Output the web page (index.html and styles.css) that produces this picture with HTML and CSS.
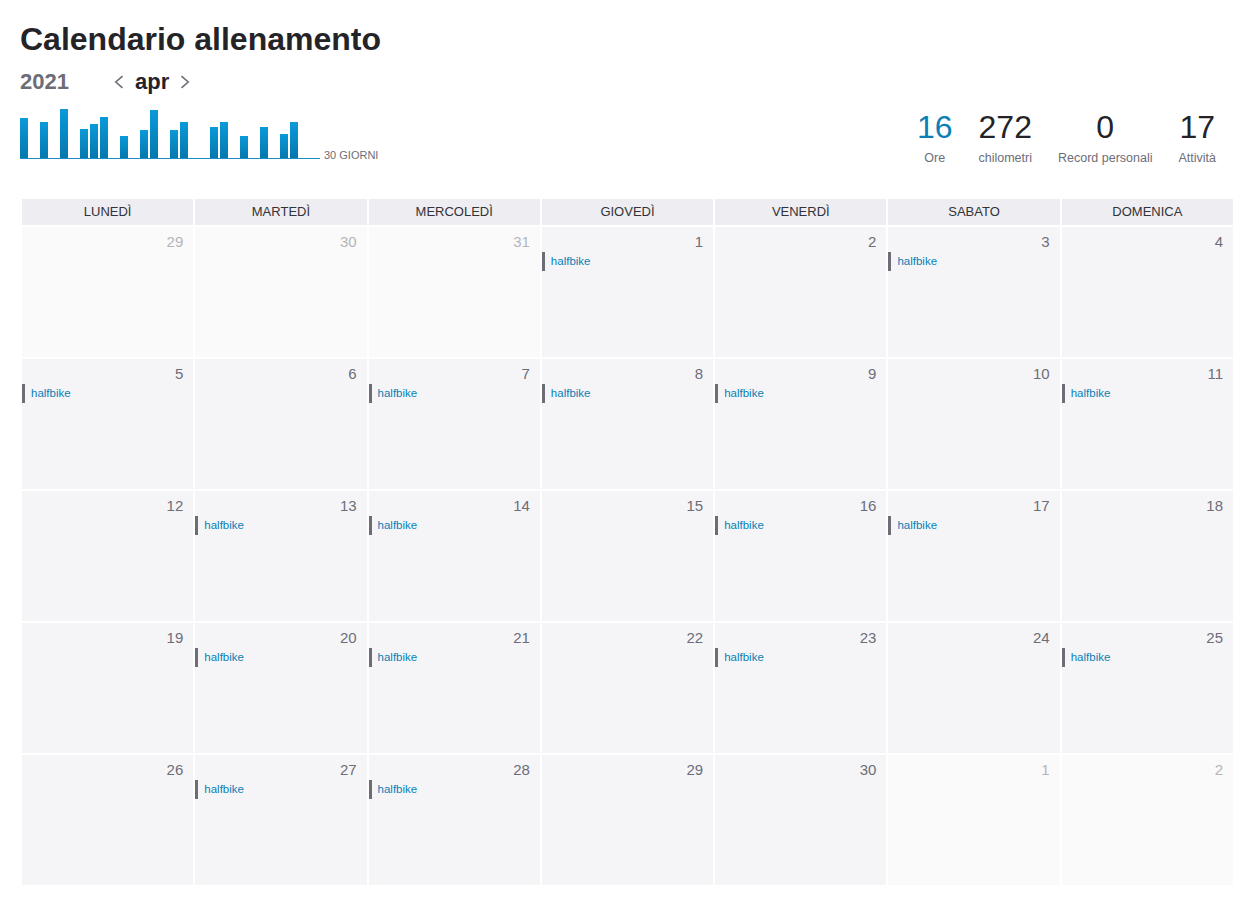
FILE: index.html
```html
<!DOCTYPE html>
<html lang="it">
<head>
<meta charset="utf-8">
<title>Calendario allenamento</title>
<link rel="stylesheet" href="styles.css">
</head>
<body>
<div class="page">
  <h1 class="title">Calendario allenamento</h1>
  <div class="subrow">
    <span class="year">2021</span>
    <div class="month-nav">
      <svg class="chev" width="10" height="14" viewBox="0 0 10 14"><polyline points="8.5,1.2 1.8,7 8.5,12.8" fill="none" stroke="#6d6d78" stroke-width="1.6"/></svg>
      <span class="month">apr</span>
      <svg class="chev" width="10" height="14" viewBox="0 0 10 14"><polyline points="1.5,1.2 8.2,7 1.5,12.8" fill="none" stroke="#6d6d78" stroke-width="1.6"/></svg>
    </div>
  </div>
  <div class="summary">
    <div class="chart-wrap">
      <div class="chart">
        <div class="slot"><div class="bar" style="height:40px"></div></div>
        <div class="slot"></div>
        <div class="slot"><div class="bar" style="height:36px"></div></div>
        <div class="slot"></div>
        <div class="slot"><div class="bar" style="height:49px"></div></div>
        <div class="slot"></div>
        <div class="slot"><div class="bar" style="height:29px"></div></div>
        <div class="slot"><div class="bar" style="height:34px"></div></div>
        <div class="slot"><div class="bar" style="height:41px"></div></div>
        <div class="slot"></div>
        <div class="slot"><div class="bar" style="height:22px"></div></div>
        <div class="slot"></div>
        <div class="slot"><div class="bar" style="height:28px"></div></div>
        <div class="slot"><div class="bar" style="height:48px"></div></div>
        <div class="slot"></div>
        <div class="slot"><div class="bar" style="height:28px"></div></div>
        <div class="slot"><div class="bar" style="height:36px"></div></div>
        <div class="slot"></div>
        <div class="slot"></div>
        <div class="slot"><div class="bar" style="height:31px"></div></div>
        <div class="slot"><div class="bar" style="height:36px"></div></div>
        <div class="slot"></div>
        <div class="slot"><div class="bar" style="height:22px"></div></div>
        <div class="slot"></div>
        <div class="slot"><div class="bar" style="height:31px"></div></div>
        <div class="slot"></div>
        <div class="slot"><div class="bar" style="height:24px"></div></div>
        <div class="slot"><div class="bar" style="height:36px"></div></div>
        <div class="slot"></div>
        <div class="slot"></div>
      </div>
      <span class="chart-label">30 GIORNI</span>
    </div>
    <div class="stats">
      <div class="stat"><div class="stat-num accent">16</div><div class="stat-label">Ore</div></div>
      <div class="stat"><div class="stat-num">272</div><div class="stat-label">chilometri</div></div>
      <div class="stat"><div class="stat-num">0</div><div class="stat-label">Record personali</div></div>
      <div class="stat"><div class="stat-num">17</div><div class="stat-label">Attività</div></div>
    </div>
  </div>

  <div class="calendar">
    <div class="cal-head">
      <div class="dow">LUNEDÌ</div>
      <div class="dow">MARTEDÌ</div>
      <div class="dow">MERCOLEDÌ</div>
      <div class="dow">GIOVEDÌ</div>
      <div class="dow">VENERDÌ</div>
      <div class="dow">SABATO</div>
      <div class="dow">DOMENICA</div>
    </div>
    <div class="cal-body">
      <div class="day other"><div class="num">29</div></div>
      <div class="day other"><div class="num">30</div></div>
      <div class="day other"><div class="num">31</div></div>
      <div class="day"><div class="num">1</div><div class="event">halfbike</div></div>
      <div class="day"><div class="num">2</div></div>
      <div class="day"><div class="num">3</div><div class="event">halfbike</div></div>
      <div class="day"><div class="num">4</div></div>

      <div class="day"><div class="num">5</div><div class="event">halfbike</div></div>
      <div class="day"><div class="num">6</div></div>
      <div class="day"><div class="num">7</div><div class="event">halfbike</div></div>
      <div class="day"><div class="num">8</div><div class="event">halfbike</div></div>
      <div class="day"><div class="num">9</div><div class="event">halfbike</div></div>
      <div class="day"><div class="num">10</div></div>
      <div class="day"><div class="num">11</div><div class="event">halfbike</div></div>

      <div class="day"><div class="num">12</div></div>
      <div class="day"><div class="num">13</div><div class="event">halfbike</div></div>
      <div class="day"><div class="num">14</div><div class="event">halfbike</div></div>
      <div class="day"><div class="num">15</div></div>
      <div class="day"><div class="num">16</div><div class="event">halfbike</div></div>
      <div class="day"><div class="num">17</div><div class="event">halfbike</div></div>
      <div class="day"><div class="num">18</div></div>

      <div class="day"><div class="num">19</div></div>
      <div class="day"><div class="num">20</div><div class="event">halfbike</div></div>
      <div class="day"><div class="num">21</div><div class="event">halfbike</div></div>
      <div class="day"><div class="num">22</div></div>
      <div class="day"><div class="num">23</div><div class="event">halfbike</div></div>
      <div class="day"><div class="num">24</div></div>
      <div class="day"><div class="num">25</div><div class="event">halfbike</div></div>

      <div class="day"><div class="num">26</div></div>
      <div class="day"><div class="num">27</div><div class="event">halfbike</div></div>
      <div class="day"><div class="num">28</div><div class="event">halfbike</div></div>
      <div class="day"><div class="num">29</div></div>
      <div class="day"><div class="num">30</div></div>
      <div class="day other"><div class="num">1</div></div>
      <div class="day other"><div class="num">2</div></div>
    </div>
  </div>
</div>
</body>
</html>
```

FILE: styles.css
```css
* { box-sizing: border-box; }

html, body {
  margin: 0;
  padding: 0;
  background: #ffffff;
}

body {
  font-family: "Liberation Sans", Arial, sans-serif;
  color: #242428;
}

.page {
  padding: 20px 16px 0 20px;
}

.title {
  margin: 0;
  font-size: 32px;
  line-height: 38px;
  font-weight: 700;
  color: #242428;
}

.subrow {
  display: flex;
  align-items: center;
  margin-top: 11px;
  height: 26px;
}

.year {
  font-size: 22px;
  line-height: 26px;
  font-weight: 700;
  color: #6d6d78;
  width: 94px;
}

.month-nav {
  display: flex;
  align-items: center;
}

.chev {
  display: block;
}

.month {
  font-size: 22px;
  line-height: 26px;
  font-weight: 700;
  color: #242428;
  margin: 0 11px 0 11px;
}

.summary {
  display: flex;
  justify-content: space-between;
  align-items: flex-start;
  margin-top: 13px;
}

.chart-wrap {
  display: flex;
  align-items: flex-end;
}

.chart {
  display: flex;
  align-items: flex-end;
  height: 51px;
  border-bottom: 1px solid #1b8cc2;
}

.slot {
  width: 10px;
  height: 100%;
  display: flex;
  align-items: flex-end;
}

.bar {
  width: 8px;
  background: linear-gradient(to bottom, #0a9ad9, #0578ad);
}

.chart-label {
  font-size: 11px;
  line-height: 11px;
  color: #6d6d78;
  margin-left: 4px;
  margin-bottom: -2px;
}

.stats {
  display: flex;
  gap: 26px;
  margin-top: 1px;
  margin-right: 17px;
}

.stat {
  display: flex;
  flex-direction: column;
  align-items: center;
}

.stat-num {
  font-size: 32px;
  line-height: 36px;
  font-weight: 400;
  color: #242428;
}

.stat-num.accent {
  color: #0a7fb6;
}

.stat-label {
  margin-top: 5px;
  font-size: 12.5px;
  line-height: 16px;
  color: #6d6d78;
}

.calendar {
  margin: 33px 0 0 2px;
}

.cal-head {
  display: grid;
  grid-template-columns: repeat(7, 1fr);
  column-gap: 2px;
  margin-bottom: 2px;
}

.dow {
  background: #ededf2;
  height: 26px;
  line-height: 26px;
  text-align: center;
  font-size: 13px;
  color: #333338;
}

.cal-body {
  display: grid;
  grid-template-columns: repeat(7, 1fr);
  grid-auto-rows: 130px;
  gap: 2px;
}

.day {
  background: #f5f5f8;
  padding-top: 6px;
}

.day.other {
  background: #fafafa;
}

.num {
  text-align: right;
  padding-right: 10px;
  font-size: 15px;
  line-height: 18px;
  color: #6d6d78;
}

.day.other .num {
  color: #b4b4ba;
}

.event {
  margin-top: 1px;
  border-left: 3px solid #6d6d78;
  padding-left: 6px;
  height: 19px;
  line-height: 19px;
  font-size: 11.5px;
  color: #0a7fb6;
}
```
